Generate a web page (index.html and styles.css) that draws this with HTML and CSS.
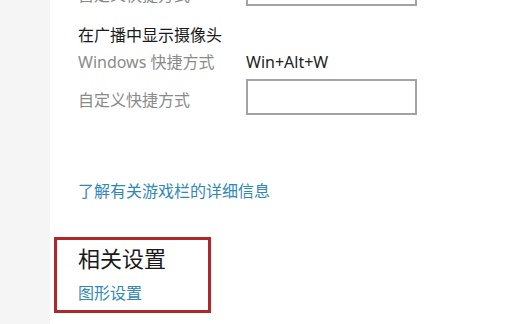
FILE: index.html
```html
<!DOCTYPE html>
<html lang="zh-CN">
<head>
<meta charset="utf-8">
<link rel="stylesheet" href="styles.css">
</head>
<body>
<div class="page">
  <aside class="side"></aside>
  <main class="main">
    <div class="row row-cut">
      <span class="label">自定义快捷方式</span>
      <div class="box"></div>
    </div>
    <h3 class="sub">在广播中显示摄像头</h3>
    <div class="row row-text">
      <span class="label">Windows 快捷方式</span>
      <span class="value">Win+Alt+W</span>
    </div>
    <div class="row row-input">
      <span class="label">自定义快捷方式</span>
      <div class="box"></div>
    </div>
    <a class="link more">了解有关游戏栏的详细信息</a>
    <section class="related">
      <h2 class="title">相关设置</h2>
      <a class="link">图形设置</a>
    </section>
  </main>
</div>
</body>
</html>
```

FILE: styles.css
```css
html, body {
  margin: 0;
  padding: 0;
  background: #ffffff;
  width: 512px;
  height: 324px;
  overflow: hidden;
  font-family: "Noto Sans", "Noto Sans CJK SC", sans-serif;
  font-size: 16px;
}
.page {
  display: flex;
  height: 324px;
}
.side {
  width: 50px;
  flex: none;
  background: #f5f5f5;
}
.main {
  flex: 1;
  padding-left: 28px;
  display: flex;
  flex-direction: column;
  align-items: flex-start;
}
.row {
  display: grid;
  grid-template-columns: 168px 171px;
  align-items: center;
}
.label {
  color: #8a8a8a;
  line-height: 22px;
}
.value {
  color: #222;
  line-height: 22px;
}
.box {
  height: 32px;
  border: 2px solid #a3a3a3;
  background: #fff;
}
.row-cut {
  margin-top: -30px;
  align-items: end;
}
.row-cut .label {
  line-height: 20px;
  margin-bottom: 1px;
}
.sub {
  margin: 18px 0 0;
  font-size: 16px;
  font-weight: normal;
  color: #1a1a1a;
  line-height: 22px;
}
.row-text {
  margin-top: 5px;
}
.row-input {
  margin-top: 6px;
}
.row-input .label {
  margin-top: 5px;
}
.link {
  color: #2f88b6;
  line-height: 22px;
  font-size: 16px;
}
.more {
  margin-top: 65px;
}
.related {
  margin: 35px 0 0 -24px;
  border: 3px solid #b0272b;
  width: 130px;
  height: 70px;
  padding-left: 21px;
  display: flex;
  flex-direction: column;
}
.title {
  margin: 3px 0 0;
  font-size: 22px;
  font-weight: normal;
  color: #1a1a1a;
  line-height: 30px;
}
.related .link {
  margin-top: 9px;
}
```
